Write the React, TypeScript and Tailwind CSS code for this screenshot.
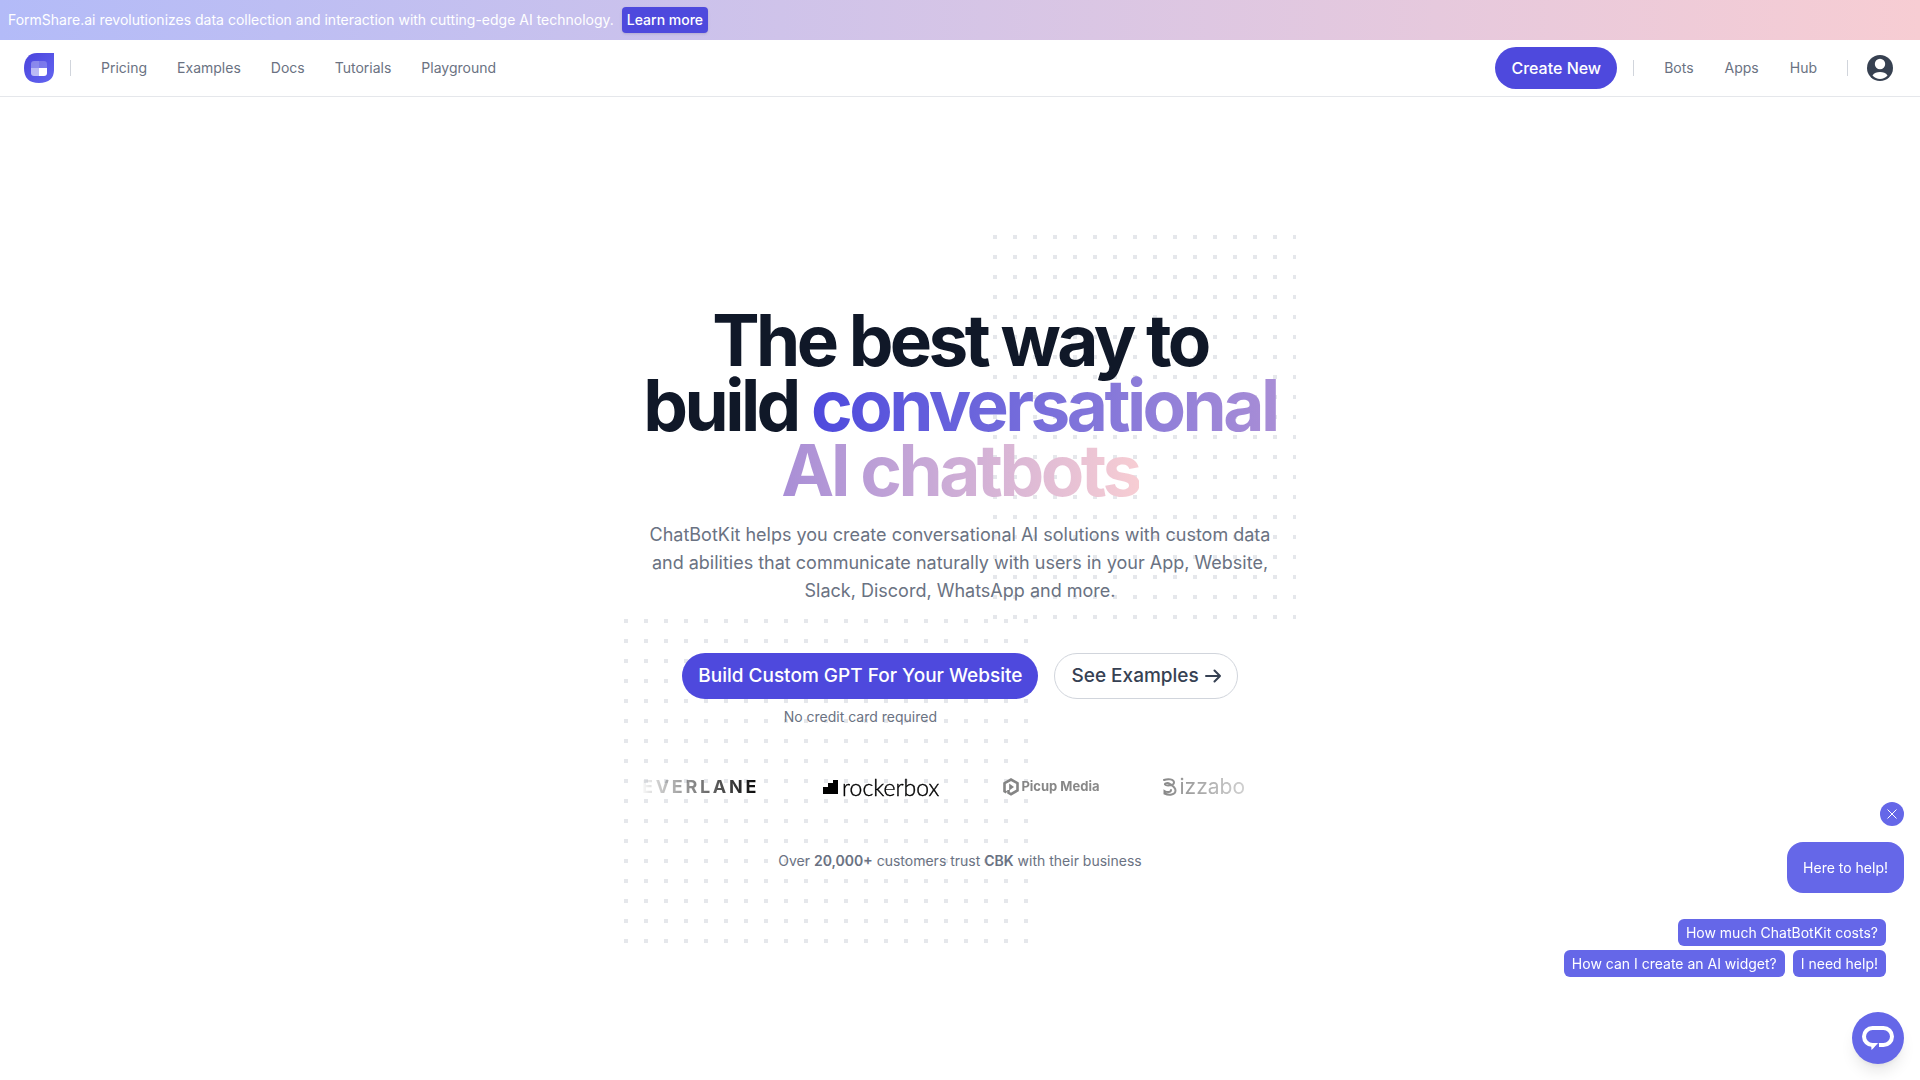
import type { ReactNode } from 'react';

const leftLinks = ['Pricing', 'Examples', 'Docs', 'Tutorials', 'Playground'];
const rightLinks = ['Bots', 'Apps', 'Hub'];

function Dots({ id, className }: { id: string; className: string }) {
  return (
    <svg aria-hidden="true" className={className}>
      <defs>
        <pattern id={id} width="20" height="20" patternUnits="userSpaceOnUse">
          <rect width="4" height="4" fill="#e5e7eb" />
        </pattern>
      </defs>
      <rect width="100%" height="100%" fill={`url(#${id})`} />
    </svg>
  );
}

function Logo() {
  return (
    <svg viewBox="0 0 30 30" className="size-[30px]" role="img" aria-label="ChatBotKit">
      <defs>
        <linearGradient id="logo-fill" x1="0" y1="0" x2="1" y2="1">
          <stop offset="0" stopColor="#4a43dc" />
          <stop offset="1" stopColor="#6366f1" />
        </linearGradient>
        <clipPath id="logo-window">
          <rect x="7" y="8" width="16" height="15" rx="3" />
        </clipPath>
      </defs>
      <path d="M13 0H30V17C30 25 25 30 15 30S0 25 0 15C0 6 5 0 13 0Z" fill="url(#logo-fill)" />
      <g clipPath="url(#logo-window)" fill="#fff">
        <rect x="7" y="8" width="8" height="7" opacity=".32" />
        <rect x="15" y="8" width="8" height="7" opacity=".22" />
        <rect x="7" y="15" width="8" height="8" opacity=".6" />
        <rect x="15" y="15" width="8" height="8" />
      </g>
    </svg>
  );
}

function Divider() {
  return <span aria-hidden="true" className="h-4 w-px bg-gray-300" />;
}

function NavLink({ children }: { children: ReactNode }) {
  return (
    <a href="#" className="text-sm text-gray-500">
      {children}
    </a>
  );
}

function Chip({ children }: { children: ReactNode }) {
  return (
    <button type="button" className="h-[27px] rounded-md bg-[#6567e8] px-2 text-sm text-white">
      {children}
    </button>
  );
}

function Customers() {
  return (
    <div className="mt-10 flex h-10 items-center justify-end gap-16 overflow-hidden pr-[35px] [mask-image:linear-gradient(to_right,transparent,rgba(0,0,0,.2)_3%,black_19%,black_45%,rgba(0,0,0,.9)_80%,rgba(0,0,0,.3)_95%,transparent)]">
      <span className="text-lg font-bold tracking-[0.15em] text-black">EVERLANE</span>
      <span className="flex items-center gap-1 text-black">
        <svg viewBox="0 0 15 14" className="h-3.5 w-[15px]" aria-hidden="true">
          <path d="M0 7H5V3H10V0H15V14H0Z" fill="currentColor" />
        </svg>
        <span className="font-['Lato','Liberation_Sans',sans-serif] text-[23px] leading-6 font-light [-webkit-text-stroke:0.4px_black]">rockerbox</span>
      </span>
      <span className="flex items-center gap-0.5 text-[#808080]">
        <svg viewBox="0 0 16 18" className="h-[18px] w-4" fill="none" stroke="currentColor" strokeWidth="2.6" aria-hidden="true">
          <path d="M3.500 14.500L1.500 13.200V5.200L8 1.500L14.500 5.200V12.500L8 16.200L5.500 14.800V12" />
          <path d="M6.200 5.500L11 9L6.200 12.500Z" fill="currentColor" stroke="none" />
        </svg>
        <span className="text-[13px] font-bold">Picup Media</span>
      </span>
      <span className="flex items-center gap-0.5 text-[#707070]">
        <svg viewBox="0 0 14 18" className="h-[18px] w-3.5" fill="none" stroke="currentColor" strokeWidth="2" strokeLinecap="round" aria-hidden="true">
          <path d="M1 2C5 .5 11 1 11 4.500C11 8 3 8 2 6.500C1.500 5 5 4.500 7 6C9 7.500 12.500 9 12.500 12.500C12.500 17 6 17.500 1.500 15.500V13C4 14.500 8 14.500 8 12" />
        </svg>
        <span className="text-[21px]">izzabo</span>
      </span>
    </div>
  );
}

function ChatWidget() {
  return (
    <aside aria-label="Chat" className="fixed right-4 bottom-4 flex flex-col items-end">
      <button type="button" aria-label="Close" className="flex size-6 items-center justify-center rounded-full bg-[#6567e8] text-white">
        <svg viewBox="0 0 10 10" className="size-2.5" stroke="currentColor" aria-hidden="true">
          <path d="M.5 .5L9.500 9.500M9.500 .5L.5 9.500" />
        </svg>
      </button>
      <p className="mt-4 rounded-2xl bg-[#6567e8] p-4 text-sm leading-[19px] text-white">Here to help!</p>
      <div className="mt-[26px] mr-[18px] flex flex-col items-end gap-1">
        <Chip>How much ChatBotKit costs?</Chip>
        <div className="flex gap-2">
          <Chip>How can I create an AI widget?</Chip>
          <Chip>I need help!</Chip>
        </div>
      </div>
      <button type="button" aria-label="Open chat" className="mt-[35px] flex size-[52px] items-center justify-center rounded-full bg-[#6567e8] text-white shadow-lg">
        <svg viewBox="0 0 32 24" className="h-6 w-8" fill="none" aria-hidden="true">
          <path d="M11 19H10.500A8.500 8.500 0 0 1 10.500 2H21.500A8.500 8.500 0 0 1 21.500 19H17" stroke="currentColor" strokeWidth="4" />
          <path d="M9 17H17L9.500 24Z" fill="currentColor" />
          <path d="M17.500 16L12.500 21.500" stroke="#6567e8" strokeWidth="1" />
        </svg>
      </button>
    </aside>
  );
}

export default function App() {
  return (
    <div className="flex min-h-screen flex-col bg-white font-['Inter','Liberation_Sans',sans-serif] text-gray-900">
      <div className="flex h-10 items-center gap-2 bg-linear-to-r from-[#b3bbf8] to-[#f7cdd3] px-2 text-sm text-white">
        <p>FormShare.ai revolutionizes data collection and interaction with cutting-edge AI technology.</p>
        <a href="#" className="rounded-sm bg-[#4e49dd] px-[5px] py-[3px] font-medium shadow-sm">Learn more</a>
      </div>

      <header className="flex h-[57px] items-center justify-between border-b border-gray-200 pr-[27px] pl-6">
        <nav aria-label="Main" className="flex items-center">
          <a href="#" className="mr-4"><Logo /></a>
          <Divider />
          <div className="ml-[30px] flex gap-[30px]">
            {leftLinks.map((l) => <NavLink key={l}>{l}</NavLink>)}
          </div>
        </nav>
        <nav aria-label="Account" className="flex items-center">
          <a href="#" className="mr-4 flex h-[42px] items-center rounded-full bg-[#4e49dd] px-4 text-base font-medium text-white">Create New</a>
          <Divider />
          <div className="mx-[30px] flex gap-[31px]">
            {rightLinks.map((l) => <NavLink key={l}>{l}</NavLink>)}
          </div>
          <Divider />
          <button type="button" aria-label="Profile" className="ml-[19px]">
            <svg viewBox="0 0 26 26" className="size-[26px]" aria-hidden="true">
              <circle cx="13" cy="13" r="13" fill="#374151" />
              <circle cx="13" cy="9" r="5.200" fill="#fff" />
              <path d="M5.500 20.500C7 17.800 10 17 13 17S19 17.800 20.500 20.500C18.500 22.800 16 24 13 24S7.500 22.800 5.500 20.500Z" fill="#fff" />
            </svg>
          </button>
        </nav>
      </header>

      <main className="relative mx-auto mt-[138px] w-full max-w-2xl overflow-hidden px-4 pt-[73px] pb-[72px] text-center">
        <Dots id="dots-top" className="absolute top-0 left-[369px] h-96 w-[404px]" />
        <Dots id="dots-bottom" className="absolute bottom-0 left-0 h-[324px] w-[404px]" />
        <div className="relative">
          <h1 className="-mx-4 text-[71px] leading-[65px] font-bold tracking-tighter">
            The best way to<br />build{' '}
            <span className="bg-linear-to-r from-[#4e49dd] via-[#a68cd6] via-55% to-[#f7cdd3] bg-clip-text text-transparent">
              conversational<br />AI chatbots
            </span>
          </h1>
          <p className="mt-[18px] text-lg leading-7 text-gray-500">
            ChatBotKit helps you create conversational AI solutions with custom data and abilities that communicate naturally with users in your App, Website, Slack, Discord, WhatsApp and more.
          </p>
          <div className="mt-12 flex items-start justify-center gap-4 text-[19px] font-medium">
            <div>
              <a href="#" className="flex h-[46px] items-center rounded-full bg-[#4e49dd] px-4 text-white">Build Custom GPT For Your Website</a>
              <p className="mt-2 text-sm font-normal text-gray-500">No credit card required</p>
            </div>
            <a href="#" className="flex h-[46px] items-center gap-1.5 rounded-full border border-gray-300 bg-white px-4 text-gray-700">
              See Examples
              <svg viewBox="0 0 16 14" className="h-3.5 w-4" fill="none" stroke="currentColor" strokeWidth="2" strokeLinecap="round" strokeLinejoin="round" aria-hidden="true">
                <path d="M1 7H15M9.500 1.500L15 7L9.500 12.500" />
              </svg>
            </a>
          </div>
          <Customers />
          <p className="mt-11 text-sm text-gray-500">
            Over <b className="font-semibold">20,000+</b> customers trust <b className="font-semibold">CBK</b> with their business
          </p>
        </div>
      </main>
      <ChatWidget />
    </div>
  );
}
